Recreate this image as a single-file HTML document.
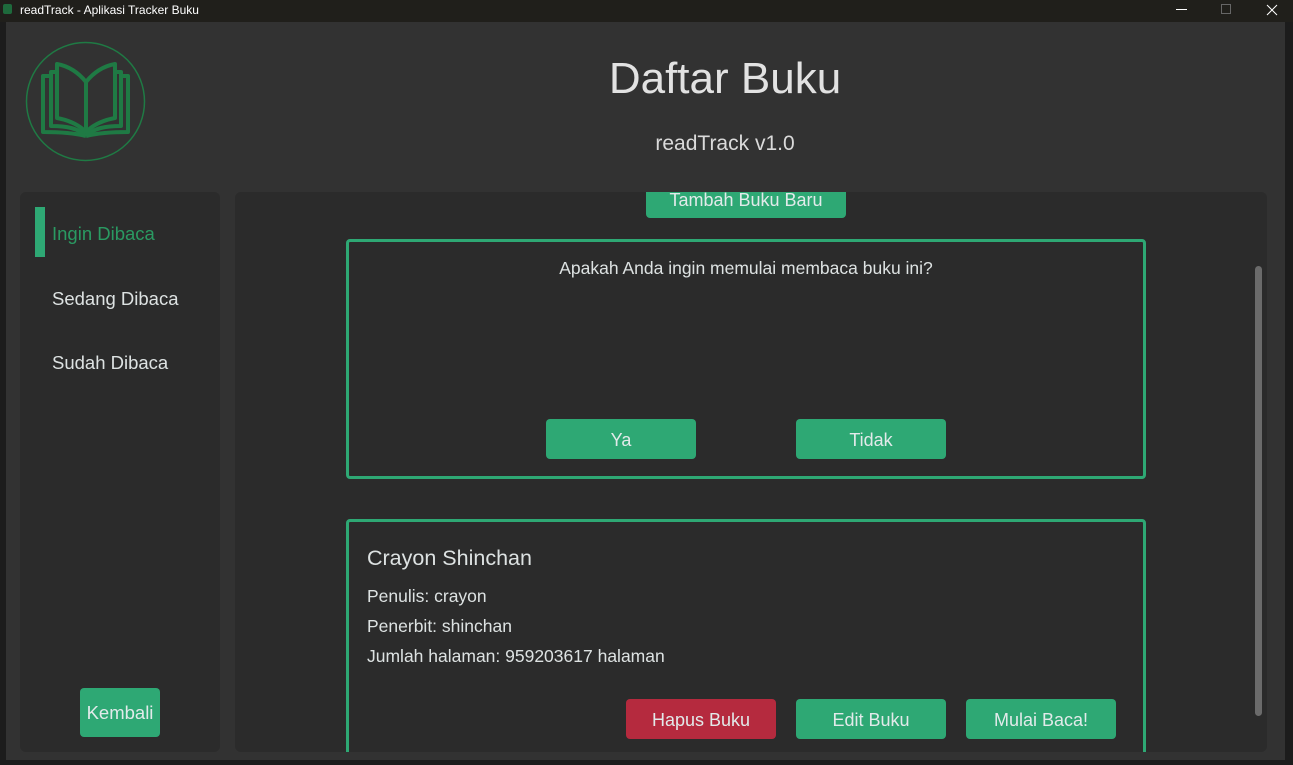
<!DOCTYPE html>
<html><head><meta charset="utf-8"><style>
*{margin:0;padding:0;box-sizing:border-box}
body{width:1293px;height:765px;background:#1c1c1c;position:relative;overflow:hidden;font-family:"Liberation Sans",sans-serif;color:#dde2e2}
.abs{position:absolute}
.tb{left:0;top:0;width:1293px;height:22px;background:#201f1b;font-size:12px;color:#fff}
.win{left:6px;top:22px;width:1279px;height:738px;background:#323232}
.panel{background:#2b2b2b;border-radius:6px}
.btn{background:#2ea874;border-radius:4px;color:#e2eaea;font-size:18px;text-align:center}
.box{border:3px solid #2ea874;border-radius:4px}
</style></head><body>
<div class="abs tb"><div class="abs" style="left:3px;top:4px;width:9px;height:10px;background:#1e6a3c;border-radius:2px"></div><span class="abs" style="left:20px;top:3px">readTrack - Aplikasi Tracker Buku</span>
<div class="abs" style="left:1176px;top:9px;width:11px;height:1px;background:#fff"></div>
<div class="abs" style="left:1221px;top:4px;width:10px;height:10px;border:1px solid #666"></div>
<svg class="abs" style="left:1266px;top:4px" width="12" height="12"><path d="M1 1L11 11M11 1L1 11" stroke="#fff" stroke-width="1"/></svg>
</div>
<div class="abs win"></div>
<svg class="abs" style="left:24px;top:40px" width="124" height="124" viewBox="0 0 124 124">
<circle cx="61.5" cy="61.5" r="59" fill="none" stroke="#1f7a44" stroke-width="1.5"/>
<g fill="none" stroke="#1f7a44" stroke-width="4" stroke-linejoin="round">
<path d="M62 42C54 32 44 26 33 24V78C44 80 54 84 62 92C70 84 80 80 91 78V24C80 26 70 32 62 42Z"/>
<path d="M62 42V92"/>
<path d="M33 32H27V86C42 86 54 88 62 96"/>
<path d="M27 36H19V92C36 92 50 93 62 96"/>
<path d="M91 32H97V86C82 86 70 88 62 96"/>
<path d="M97 36H104V92C88 92 74 93 62 96"/>
</g></svg>
<div class="abs" style="left:0;width:1450px;top:54px;text-align:center;font-size:44px;color:#e2e2e2">Daftar Buku</div>
<div class="abs" style="left:0;width:1450px;top:132px;text-align:center;font-size:21px;color:#dadada">readTrack v1.0</div>
<div class="abs panel" style="left:20px;top:192px;width:200px;height:560px">
<div class="abs" style="left:15px;top:15px;width:10px;height:50px;background:#2ea874"></div>
<div class="abs" style="left:32px;top:31px;font-size:18.5px;color:#2a9a62">Ingin Dibaca</div>
<div class="abs" style="left:32px;top:96px;font-size:18.5px">Sedang Dibaca</div>
<div class="abs" style="left:32px;top:160px;font-size:18.5px">Sudah Dibaca</div>
<div class="abs btn" style="left:60px;top:496px;width:80px;height:49px;line-height:49px;font-size:18.5px">Kembali</div>
</div>
<div class="abs panel" style="left:235px;top:192px;width:1032px;height:560px;overflow:hidden">
<div class="abs btn" style="left:411px;top:-8px;width:200px;height:34px;line-height:32px">Tambah Buku Baru</div>
<div class="abs" style="left:1020px;top:74px;width:7px;height:450px;background:#6b6b6b;border-radius:4px"></div>
<div class="abs box" style="left:111px;top:47px;width:800px;height:240px">
<div style="text-align:center;margin-top:16px;font-size:17.5px">Apakah Anda ingin memulai membaca buku ini?</div>
<div class="abs btn" style="left:197px;top:177px;width:150px;height:40px;line-height:42px">Ya</div>
<div class="abs btn" style="left:447px;top:177px;width:150px;height:40px;line-height:42px">Tidak</div>
</div>
<div class="abs box" style="left:111px;top:327px;width:800px;height:260px">
<div class="abs" style="left:18px;top:24px;font-size:21.5px">Crayon Shinchan</div>
<div class="abs" style="left:18px;top:64px;font-size:17.5px">Penulis: crayon</div>
<div class="abs" style="left:18px;top:94px;font-size:17.5px">Penerbit: shinchan</div>
<div class="abs" style="left:18px;top:124px;font-size:17.5px">Jumlah halaman: 959203617 halaman</div>
<div class="abs btn" style="left:277px;top:177px;width:150px;height:40px;line-height:42px;background:#b52a3e">Hapus Buku</div>
<div class="abs btn" style="left:447px;top:177px;width:150px;height:40px;line-height:42px">Edit Buku</div>
<div class="abs btn" style="left:617px;top:177px;width:150px;height:40px;line-height:42px">Mulai Baca!</div>
</div>
</div>
</body></html>
